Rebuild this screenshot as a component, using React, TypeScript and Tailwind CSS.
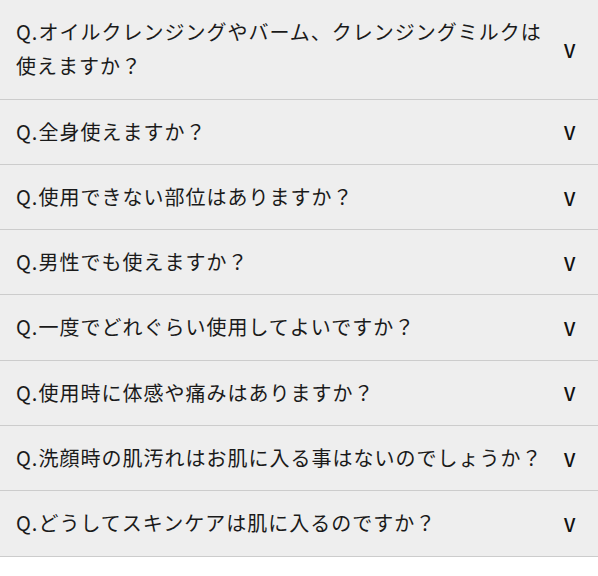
const questions = [
  "Q.オイルクレンジングやバーム、クレンジングミルクは使えますか？",
  "Q.全身使えますか？",
  "Q.使用できない部位はありますか？",
  "Q.男性でも使えますか？",
  "Q.一度でどれぐらい使用してよいですか？",
  "Q.使用時に体感や痛みはありますか？",
  "Q.洗顔時の肌汚れはお肌に入る事はないのでしょうか？",
  "Q.どうしてスキンケアは肌に入るのですか？",
];

function FaqRow({ q }: { q: string }) {
  return (
    <div className="flex items-center gap-4 border-b border-[#cccccc] bg-[#eeeeee] py-[15px] pl-4 pr-5">
      <p className="flex-1 text-[20px] font-normal leading-[34.3px] tracking-[1px] text-[#1a1a1a]">{q}</p>
      <span className="w-[14px] text-[19px] font-medium leading-none text-[#111111]">V</span>
    </div>
  );
}

export default function App() {
  return (
    <div
      className="w-[598px] bg-white"
      style={{ fontFamily: '"Noto Sans CJK JP", "Noto Sans", sans-serif' }}
    >
      {questions.map((q) => (
        <FaqRow key={q} q={q} />
      ))}
    </div>
  );
}
